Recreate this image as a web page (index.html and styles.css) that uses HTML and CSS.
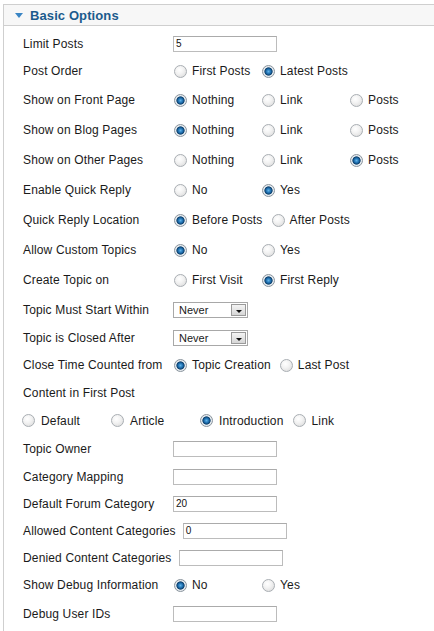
FILE: index.html
```html
<!DOCTYPE html>
<html>
<head>
<meta charset="utf-8">
<link rel="stylesheet" href="styles.css">
</head>
<body>
<div class="panel">
  <div class="panel-head"><span class="tri"></span><span class="title">Basic Options</span></div>
  <div class="rows">
    <div class="row h27"><span class="lbl">Limit Posts</span><span class="txt">5</span></div>
    <div class="row h28"><span class="lbl">Post Order</span>
      <span class="opt"><i class="rad"></i><span class="ot">First Posts</span></span>
      <span class="opt"><i class="rad on"></i><span class="ot">Latest Posts</span></span></div>
    <div class="row h30"><span class="lbl">Show on Front Page</span>
      <span class="opt"><i class="rad on"></i><span class="ot">Nothing</span></span>
      <span class="opt"><i class="rad"></i><span class="ot w">Link</span></span>
      <span class="opt"><i class="rad"></i><span class="ot">Posts</span></span></div>
    <div class="row h30"><span class="lbl">Show on Blog Pages</span>
      <span class="opt"><i class="rad on"></i><span class="ot">Nothing</span></span>
      <span class="opt"><i class="rad"></i><span class="ot w">Link</span></span>
      <span class="opt"><i class="rad"></i><span class="ot">Posts</span></span></div>
    <div class="row h30"><span class="lbl">Show on Other Pages</span>
      <span class="opt"><i class="rad"></i><span class="ot">Nothing</span></span>
      <span class="opt"><i class="rad"></i><span class="ot w">Link</span></span>
      <span class="opt"><i class="rad on"></i><span class="ot">Posts</span></span></div>
    <div class="row h30"><span class="lbl">Enable Quick Reply</span>
      <span class="opt"><i class="rad"></i><span class="ot">No</span></span>
      <span class="opt"><i class="rad on"></i><span class="ot">Yes</span></span></div>
    <div class="row h30"><span class="lbl">Quick Reply Location</span>
      <span class="opt"><i class="rad on"></i><span class="ot">Before Posts</span></span>
      <span class="opt"><i class="rad"></i><span class="ot">After Posts</span></span></div>
    <div class="row h30"><span class="lbl">Allow Custom Topics</span>
      <span class="opt"><i class="rad on"></i><span class="ot">No</span></span>
      <span class="opt"><i class="rad"></i><span class="ot">Yes</span></span></div>
    <div class="row h30"><span class="lbl">Create Topic on</span>
      <span class="opt"><i class="rad"></i><span class="ot">First Visit</span></span>
      <span class="opt"><i class="rad on"></i><span class="ot">First Reply</span></span></div>
    <div class="row h30"><span class="lbl">Topic Must Start Within</span>
      <span class="sel"><span class="sv">Never</span><span class="sb"></span></span></div>
    <div class="row h26"><span class="lbl">Topic is Closed After</span>
      <span class="sel"><span class="sv">Never</span><span class="sb"></span></span></div>
    <div class="row h28"><span class="lbl">Close Time Counted from</span>
      <span class="opt"><i class="rad on"></i><span class="ot">Topic Creation</span></span>
      <span class="opt"><i class="rad"></i><span class="ot">Last Post</span></span></div>
    <div class="row h28"><span class="lbl">Content in First Post</span></div>
    <div class="row h27 sub">
      <span class="opt"><i class="rad"></i><span class="ot">Default</span></span>
      <span class="opt"><i class="rad"></i><span class="ot">Article</span></span>
      <span class="opt"><i class="rad on"></i><span class="ot">Introduction</span></span>
      <span class="opt"><i class="rad"></i><span class="ot">Link</span></span></div>
    <div class="row h29"><span class="lbl">Topic Owner</span><span class="txt"></span></div>
    <div class="row h27"><span class="lbl">Category Mapping</span><span class="txt"></span></div>
    <div class="row h27"><span class="lbl">Default Forum Category</span><span class="txt">20</span></div>
    <div class="row h27"><span class="lbl">Allowed Content Categories</span><span class="txt">0</span></div>
    <div class="row h27"><span class="lbl">Denied Content Categories</span><span class="txt"></span></div>
    <div class="row h28"><span class="lbl">Show Debug Information</span>
      <span class="opt"><i class="rad on"></i><span class="ot">No</span></span>
      <span class="opt"><i class="rad"></i><span class="ot">Yes</span></span></div>
    <div class="row h30"><span class="lbl">Debug User IDs</span><span class="txt"></span></div>
  </div>
</div>
</body>
</html>
```

FILE: styles.css
```css
html, body {
  margin: 0;
  padding: 0;
  background: #ffffff;
  height: 100%;
  overflow: hidden;
}
body {
  font-family: "Liberation Sans", Arial, sans-serif;
  font-size: 12px;
  color: #1a1a1a;
}
.panel {
  margin: 4px 0 0 3px;
  border-left: 1px solid #cfcfcf;
  border-top: 1px solid #cfcfcf;
  height: calc(100% - 5px);
  overflow: hidden;
}
.panel-head {
  height: 20px;
  background: #f7f7f7;
  border-bottom: 1px solid #cfcfcf;
  display: flex;
  align-items: center;
  padding-left: 11px;
}
.tri {
  width: 0;
  height: 0;
  border-left: 4px solid transparent;
  border-right: 4px solid transparent;
  border-top: 5px solid #3a85c4;
  margin-right: 7px;
  margin-top: 1px;
}
.title {
  font-weight: bold;
  font-size: 13px;
  color: #1b5b8d;
  letter-spacing: 0.1px;
}
.rows {
  padding-top: 4px;
}
.row {
  display: flex;
  align-items: center;
  padding-left: 19px;
  letter-spacing: 0.15px;
}
.h26 { height: 26px; }
.h27 { height: 27px; }
.h28 { height: 28px; }
.h29 { height: 29px; }
.h30 { height: 30px; }
.lbl {
  min-width: 150px;
  box-sizing: border-box;
  padding-right: 7px;
  white-space: nowrap;
}
.txt {
  width: 104px;
  height: 16px;
  box-sizing: border-box;
  border: 1px solid #bcbcbc;
  border-top-color: #ababab;
  font-size: 10px;
  line-height: 14px;
  padding-left: 2px;
  color: #111;
  letter-spacing: 0;
}
.opt {
  display: inline-flex;
  align-items: center;
}
.rad {
  display: inline-block;
  width: 11px;
  height: 11px;
  border-radius: 50%;
  border: 1px solid #a9aeb3;
  background: radial-gradient(circle at 40% 35%, #ffffff 0%, #f3f3f3 40%, #d7d7d7 100%);
  margin-left: 1px;
  box-sizing: content-box;
}
.rad.on {
  border-color: #8a949d;
  background: radial-gradient(circle at 50% 50%, #5fb3ea 0%, #1e6eae 30%, #0d3f6b 48%, #e9eef2 58%, #d4d8dc 100%);
}
.ot {
  margin-left: 5px;
  min-width: 61px;
  margin-right: 8px;
  white-space: nowrap;
}
.sub {
  padding-left: 17px;
}
.sub .ot {
  margin-left: 6px;
}
.sel {
  width: 75px;
  height: 16px;
  box-sizing: border-box;
  border: 1px solid #a8a8a8;
  display: flex;
  align-items: stretch;
  background: #fff;
}
.sv {
  flex: 1;
  font-size: 11px;
  line-height: 14px;
  padding-left: 5px;
  letter-spacing: 0;
}
.sb {
  width: 15px;
  margin: 1px;
  box-sizing: border-box;
  border: 1px solid #9a9a9a;
  background: linear-gradient(#f4f4f4, #d6d6d6);
  display: flex;
  align-items: center;
  justify-content: center;
}
.sb::after {
  content: "";
  width: 0;
  height: 0;
  border-left: 3px solid transparent;
  border-right: 3px solid transparent;
  border-top: 3px solid #111;
  margin-top: 2px;
}
```
